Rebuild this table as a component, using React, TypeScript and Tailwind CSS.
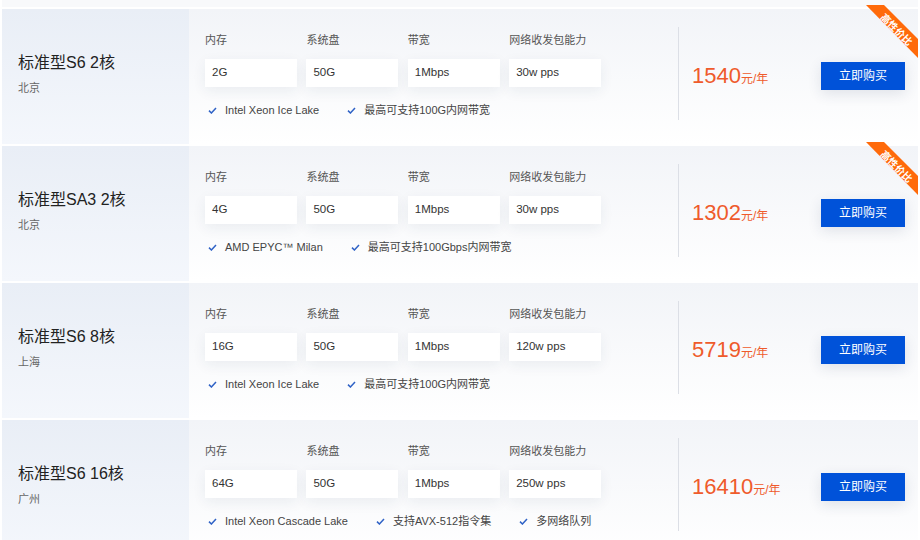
type Plan = {
  name: string
  region: string
  specs: string[]
  features: string[]
  price: string
  hot?: boolean
}

const labels = ['内存', '系统盘', '带宽', '网络收发包能力']

const plans: Plan[] = [
  {
    name: '标准型S6 2核',
    region: '北京',
    specs: ['2G', '50G', '1Mbps', '30w pps'],
    features: ['Intel Xeon Ice Lake', '最高可支持100G内网带宽'],
    price: '1540',
    hot: true,
  },
  {
    name: '标准型SA3 2核',
    region: '北京',
    specs: ['4G', '50G', '1Mbps', '30w pps'],
    features: ['AMD EPYC™ Milan', '最高可支持100Gbps内网带宽'],
    price: '1302',
    hot: true,
  },
  {
    name: '标准型S6 8核',
    region: '上海',
    specs: ['16G', '50G', '1Mbps', '120w pps'],
    features: ['Intel Xeon Ice Lake', '最高可支持100G内网带宽'],
    price: '5719',
  },
  {
    name: '标准型S6 16核',
    region: '广州',
    specs: ['64G', '50G', '1Mbps', '250w pps'],
    features: ['Intel Xeon Cascade Lake', '支持AVX-512指令集', '多网络队列'],
    price: '16410',
  },
]

function Check() {
  return (
    <svg width="9" height="7" viewBox="0 0 9 7" className="shrink-0">
      <path d="M1 3.6 L3.4 6 L8 1" fill="none" stroke="#2f62c6" strokeWidth="1.5" />
    </svg>
  )
}

// 右上角的"高性价比"斜角标签
function Ribbon() {
  return (
    <svg width="54" height="56" viewBox="0 0 54 56" className="absolute right-0 top-[-4px]">
      <polygon points="2,0 20,0 54,34 54,53" fill="#ff6a0a" />
      <text
        x="0"
        y="0"
        transform="translate(33 24) rotate(45)"
        textAnchor="middle"
        dominantBaseline="central"
        fill="#fff"
        fontSize="10"
        fontWeight="700"
        fontFamily='"Noto Sans CJK SC", sans-serif'
      >
        高性价比
      </text>
    </svg>
  )
}

function PlanCard({ plan }: { plan: Plan }) {
  return (
    <div className="relative mx-[2px] flex h-[135px] shrink-0 bg-gradient-to-b from-[#f2f4f8] to-[#ffffff]">
      <div className="w-[187px] shrink-0 bg-gradient-to-b from-[#e9eef6] to-[#f4f7fc] pl-4 pt-[43px]">
        <div className="text-[16px] leading-[22px] text-[#222]">{plan.name}</div>
        <div className="mt-[7px] text-[11px] leading-[14px] text-[#666]">{plan.region}</div>
      </div>

      <div className="w-[489px] shrink-0 pl-4 pt-[24px]">
        <div className="flex gap-[9.4px]">
          {labels.map((label, i) => (
            <div key={label} className="w-[92px]">
              <div className="text-[11px] leading-[14px] text-[#555]">{label}</div>
              <div className="mt-[12px] flex h-[28px] items-center bg-white pl-[7px] text-[11.5px] text-[#333] shadow-[0_4px_14px_rgba(30,50,90,0.07)]">
                {plan.specs[i]}
              </div>
            </div>
          ))}
        </div>
        <div className="mt-[15px] flex h-4 items-center gap-[28px] pl-[3px]">
          {plan.features.map((f) => (
            <div key={f} className="flex items-center gap-[8px] text-[11px] text-[#444]">
              <Check />
              <span>{f}</span>
            </div>
          ))}
        </div>
      </div>

      <div className="mt-[18px] h-[93px] w-px shrink-0 bg-[#dcdfe6]" />

      <div className="flex flex-1 items-center justify-between pb-[1px] pl-[13px] pr-[13px]">
        <div className="flex items-baseline text-[#ef5b2c]">
          <span className="text-[22px] leading-none">{plan.price}</span>
          <span className="text-[12px]">元/年</span>
        </div>
        <button className="flex h-[28px] w-[84px] items-center justify-center bg-[#0052d9] text-[12px] text-white shadow-[0_4px_14px_rgba(30,50,90,0.12)]">
          立即购买
        </button>
      </div>

      {plan.hot && <Ribbon />}
    </div>
  )
}

export default function App() {
  return (
    <div
      className="flex h-[540px] w-[920px] flex-col gap-[2px] overflow-hidden bg-white"
      style={{ fontFamily: '"Liberation Sans", "Noto Sans CJK SC", sans-serif' }}
    >
      <div className="mx-[2px] h-[7px] shrink-0 bg-[#f8f9fb]" />
      {plans.map((p) => (
        <PlanCard key={p.name} plan={p} />
      ))}
    </div>
  )
}
